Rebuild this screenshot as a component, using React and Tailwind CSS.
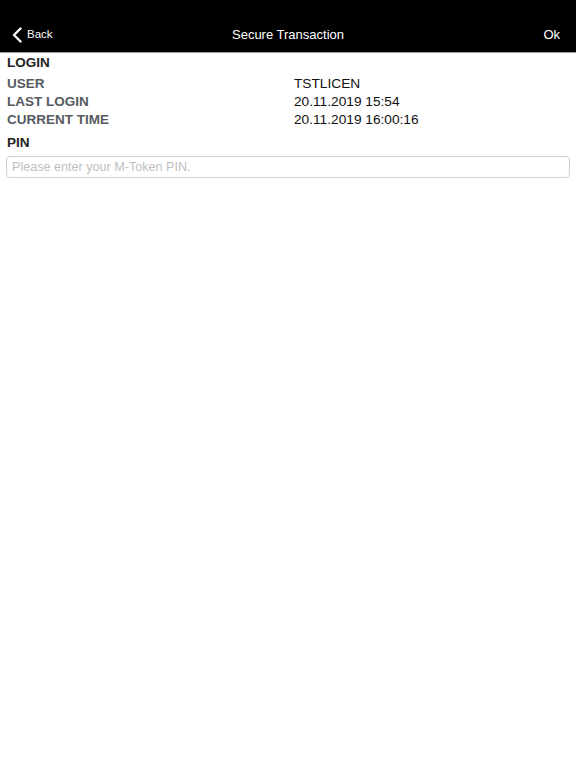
import React from 'react'

const rows = [
  ['USER', 'TSTLICEN'],
  ['LAST LOGIN', '20.11.2019 15:54'],
  ['CURRENT TIME', '20.11.2019 16:00:16'],
]

export default function App() {
  return (
    <div className="w-[576px] h-[768px] bg-white font-['Liberation_Sans',Arial,sans-serif]">
      {/* Nav bar */}
      <div className="h-[53px] bg-black border-b border-[#9a9a9a] pt-[17px] flex items-center px-3 relative text-white">
        <div className="flex items-center gap-[5px] w-[80px]">
          <svg width="10" height="16" viewBox="0 0 10 16" fill="none">
            <path d="M8.5 1.5 2 8l6.5 6.5" stroke="white" strokeWidth="2.4" strokeLinecap="round" strokeLinejoin="round" />
          </svg>
          <span className="text-[11.5px]">Back</span>
        </div>
        <div className="flex-1 text-center text-[13px]">Secure Transaction</div>
        <div className="w-[80px] text-right text-[13px] pr-[4px]">Ok</div>
      </div>

      {/* Content */}
      <div className="px-[7px] pt-[1px]">
        <div className="h-[18px] leading-[18px] text-[13.5px] font-bold text-[#222]">LOGIN</div>
        <div className="mt-[3px]">
          {rows.map(([label, value]) => (
            <div key={label} className="flex h-[18px] leading-[18px]">
              <div className="w-[287px] text-[13.5px] font-bold text-[#555a60]">{label}</div>
              <div className="text-[13.7px] text-[#111]">{value}</div>
            </div>
          ))}
        </div>
        <div className="mt-[5px] h-[18px] leading-[18px] text-[13.5px] font-bold text-[#222]">PIN</div>
        <input
          className="mt-[4px] w-[564px] h-[22px] -ml-[1px] border border-[#cfcfcf] rounded-[4px] px-[5px] text-[12.6px] outline-none placeholder:text-[#c0c0c0]"
          placeholder="Please enter your M-Token PIN."
        />
      </div>
    </div>
  )
}
